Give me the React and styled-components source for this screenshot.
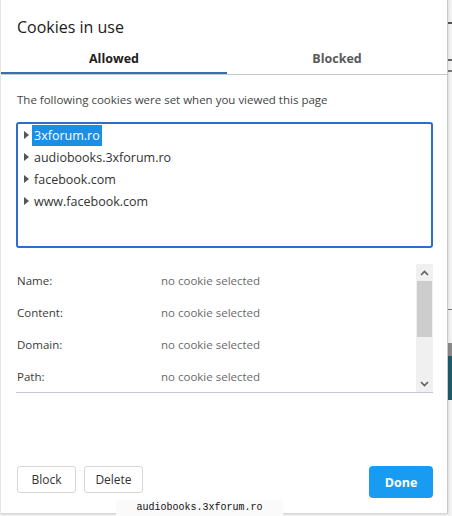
import React, { useState } from 'react';
import styled, { createGlobalStyle, css } from 'styled-components';

const GlobalStyle = createGlobalStyle`
  html, body {
    margin: 0;
    padding: 0;
    background: #f3f3f3;
  }
  body {
    font-family: "Open Sans", "Noto Sans", sans-serif;
  }
`;

const Page = styled.div`
  position: relative;
  width: 452px;
  height: 516px;
  overflow: hidden;
  display: flex;
  align-items: flex-start;
`;

// bits of the page that peek out from behind the dialog
const PageMark = styled.div`
  position: absolute;
  right: 0;
  width: 4px;
  top: ${(p) => p.top}px;
  height: ${(p) => p.h}px;
  background: ${(p) => p.color};
`;

const Dialog = styled.div`
  position: relative;
  z-index: 1;
  margin-left: 1px;
  width: 446px;
  height: 513px;
  background: #fff;
  border-right: 1px solid #c9c9c9;
  border-bottom: 1px solid #d6d6d6;
  box-shadow: 0 0 3px rgba(0, 0, 0, 0.15);
  display: flex;
  flex-direction: column;
`;

const Title = styled.h1`
  margin: 0;
  padding: 16px 0 0 16px;
  height: 26px;
  font-size: 16px;
  font-weight: 400;
  line-height: 22px;
  color: #202020;
`;

const TabList = styled.div`
  display: flex;
  border-bottom: 1px solid #c8c8c8;
`;

const Tab = styled.button`
  flex: 1 1 0;
  height: 32px;
  padding: 0;
  border: none;
  background: transparent;
  font-family: inherit;
  font-size: 12.5px;
  font-weight: 700;
  color: ${(p) => (p.active ? '#202020' : '#5a5a5a')};
  cursor: pointer;
  ${(p) =>
    p.active &&
    css`
      flex-basis: 6px;
      box-shadow: inset 0 -2px 0 #2f71b4;
    `}
`;

const Body = styled.div`
  flex: 1;
  display: flex;
  flex-direction: column;
  padding: 16px 14px 15px 15px;
`;

const Description = styled.p`
  margin: 0 0 13px 1px;
  font-size: 11.5px;
  line-height: 18px;
  color: #444;
`;

const Tree = styled.ul`
  list-style: none;
  margin: 0;
  padding: 0;
  height: 122px;
  border: 2px solid #2b6fcb;
  border-radius: 3px;
`;

const TreeRow = styled.li`
  display: flex;
  align-items: center;
  height: 22px;
  padding-left: 6px;
`;

const Caret = styled.svg`
  width: 5px;
  height: 8px;
  margin-right: 3px;
  flex-shrink: 0;
`;

const TreeLabel = styled.span`
  padding: 0 2px;
  height: 21px;
  line-height: 21px;
  font-size: 12.5px;
  color: ${(p) => (p.selected ? '#fff' : '#333')};
  background: ${(p) => (p.selected ? '#1b8fe6' : 'transparent')};
`;

const Details = styled.div`
  margin-top: 16px;
  display: flex;
  border-bottom: 1px solid #c3c7cf;
`;

const DetailList = styled.div`
  flex: 1;
`;

const DetailRow = styled.div`
  display: grid;
  grid-template-columns: 144px 1fr;
  align-items: center;
  height: 32px;
  padding-left: 1px;
  font-size: 11.5px;
`;

const DetailLabel = styled.span`
  color: #3a3a3a;
`;

const DetailValue = styled.span`
  color: #6a6a6a;
`;

const Scrollbar = styled.div`
  width: 17px;
  display: flex;
  flex-direction: column;
  align-items: center;
  background: #f0f0f0;
`;

const ScrollArrow = styled.div`
  height: 17px;
  width: 17px;
  display: flex;
  align-items: center;
  justify-content: center;
`;

const Thumb = styled.div`
  width: 15px;
  height: 56px;
  background: #cdcdcd;
`;

const Track = styled.div`
  flex: 1;
`;

const Footer = styled.div`
  margin-top: auto;
  display: flex;
  align-items: flex-start;
  gap: 8px;
  padding-left: 1px;
`;

const Button = styled.button`
  height: 27px;
  width: 59px;
  padding: 0;
  font-family: inherit;
  font-size: 12px;
  color: #333;
  background: #fff;
  border: 1px solid #d3d6da;
  border-radius: 3px;
  cursor: pointer;
`;

const PrimaryButton = styled(Button)`
  margin-left: auto;
  width: 64px;
  height: 32px;
  border: none;
  border-radius: 4px;
  background: #1a9bf2;
  color: #fff;
  font-size: 12.5px;
  font-weight: 700;
`;

const StatusBar = styled.div`
  position: absolute;
  z-index: 2;
  left: 116px;
  bottom: 0;
  width: 167px;
  height: 16px;
  background: #fafafa;
  font-family: "Liberation Mono", "DejaVu Sans Mono", monospace;
  font-size: 10px;
  line-height: 16px;
  text-align: center;
  color: #111;
`;

const Chevron = ({ up }) => (
  <svg width="9" height="6" viewBox="0 0 9 6">
    <path
      d={up ? 'M1 5 L4.5 1.5 L8 5' : 'M1 1 L4.5 4.5 L8 1'}
      fill="none"
      stroke="#5f5f5f"
      strokeWidth="1.6"
    />
  </svg>
);

const domains = ['3xforum.ro', 'audiobooks.3xforum.ro', 'facebook.com', 'www.facebook.com'];
const fields = ['Name:', 'Content:', 'Domain:', 'Path:'];

const App = () => {
  const [tab, setTab] = useState('allowed');
  const [selected, setSelected] = useState(0);

  return (
    <Page>
      <GlobalStyle />
      <PageMark top={22} h={2} color="#555" />
      <PageMark top={59} h={2} color="#666" />
      <PageMark top={70} h={2} color="#777" />
      <PageMark top={309} h={1} color="#777" />
      <PageMark top={343} h={13} color="#8a8a8a" />
      <PageMark top={356} h={44} color="#1e5b6b" />
      <Dialog>
        <Title>Cookies in use</Title>
        <TabList>
          <Tab active={tab === 'allowed'} onClick={() => setTab('allowed')}>
            Allowed
          </Tab>
          <Tab active={tab === 'blocked'} onClick={() => setTab('blocked')}>
            Blocked
          </Tab>
        </TabList>
        <Body>
          <Description>The following cookies were set when you viewed this page</Description>
          <Tree>
            {domains.map((d, i) => (
              <TreeRow key={d} onClick={() => setSelected(i)}>
                <Caret viewBox="0 0 5 8">
                  <path d="M0 0 L5 4 L0 8 Z" fill="#555" />
                </Caret>
                <TreeLabel selected={selected === i}>{d}</TreeLabel>
              </TreeRow>
            ))}
          </Tree>
          <Details>
            <DetailList>
              {fields.map((f) => (
                <DetailRow key={f}>
                  <DetailLabel>{f}</DetailLabel>
                  <DetailValue>no cookie selected</DetailValue>
                </DetailRow>
              ))}
            </DetailList>
            <Scrollbar>
              <ScrollArrow>
                <Chevron up />
              </ScrollArrow>
              <Thumb />
              <Track />
              <ScrollArrow>
                <Chevron />
              </ScrollArrow>
            </Scrollbar>
          </Details>
          <Footer>
            <Button>Block</Button>
            <Button>Delete</Button>
            <PrimaryButton>Done</PrimaryButton>
          </Footer>
        </Body>
      </Dialog>
      <StatusBar>audiobooks.3xforum.ro</StatusBar>
    </Page>
  );
};

export default App;
